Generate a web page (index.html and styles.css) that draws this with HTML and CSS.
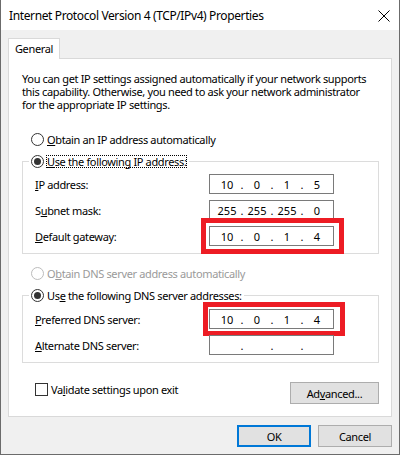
FILE: index.html
```html
<!DOCTYPE html>
<html>
<head>
<meta charset="utf-8">
<link rel="stylesheet" href="styles.css">
</head>
<body>
<div class="window">
  <div class="titlebar">
    <span class="title">Internet Protocol Version 4 (TCP/IPv4) Properties</span>
    <svg class="close" width="12" height="12" viewBox="0 0 12 12"><path d="M0.5 0.5L11.5 11.5M11.5 0.5L0.5 11.5" stroke="#000" stroke-width="1" fill="none"/></svg>
  </div>
  <div class="client">
    <div class="tabs"><div class="tab">General</div></div>
    <div class="panel">
      <div class="desc">
        <div class="dline">You can get IP settings assigned automatically if your network supports</div>
        <div class="dline">this capability. Otherwise, you need to ask your network administrator</div>
        <div class="dline">for the appropriate IP settings.</div>
      </div>
      <div class="opt"><span class="radio"></span><span class="lbl"><u>O</u>btain an IP address automatically</span></div>
      <div class="group">
        <div class="legend"><span class="radio checked"></span><span class="lbl focus"><u>U</u>se the following IP address:</span></div>
        <div class="field"><span class="flabel"><u>I</u>P address:</span>
          <div class="ip"><span class="seg">10</span><span class="dot">.</span><span class="seg">0</span><span class="dot">.</span><span class="seg">1</span><span class="dot">.</span><span class="seg">5</span></div>
        </div>
        <div class="field"><span class="flabel">S<u>u</u>bnet mask:</span>
          <div class="ip"><span class="seg">255</span><span class="dot">.</span><span class="seg">255</span><span class="dot">.</span><span class="seg">255</span><span class="dot">.</span><span class="seg">0</span></div>
        </div>
        <div class="field"><span class="flabel"><u>D</u>efault gateway:</span>
          <div class="ip"><span class="seg">10</span><span class="dot">.</span><span class="seg">0</span><span class="dot">.</span><span class="seg">1</span><span class="dot">.</span><span class="seg">4</span><span class="mark mark-gw"></span></div>
        </div>
      </div>
      <div class="opt disabled"><span class="radio"></span><span class="lbl">O<u>b</u>tain DNS server address automatically</span></div>
      <div class="group">
        <div class="legend"><span class="radio checked"></span><span class="lbl">Us<u>e</u> the following DNS server addresses:</span></div>
        <div class="field dns-first"><span class="flabel"><u>P</u>referred DNS server:</span>
          <div class="ip"><span class="seg">10</span><span class="dot">.</span><span class="seg">0</span><span class="dot">.</span><span class="seg">1</span><span class="dot">.</span><span class="seg">4</span><span class="mark mark-dns"></span></div>
        </div>
        <div class="field"><span class="flabel"><u>A</u>lternate DNS server:</span>
          <div class="ip"><span class="seg"></span><span class="dot">.</span><span class="seg"></span><span class="dot">.</span><span class="seg"></span><span class="dot">.</span><span class="seg"></span></div>
        </div>
      </div>
      <div class="bottomrow">
        <div class="check"><span class="box"></span><span class="lbl">Va<u>l</u>idate settings upon exit</span></div>
        <div class="btn adv">Ad<u>v</u>anced...</div>
      </div>
    </div>
    <div class="buttons">
      <div class="btn default">OK</div>
      <div class="btn">Cancel</div>
    </div>
  </div>
</div>
</body>
</html>
```
FILE: styles.css
```css
* { box-sizing: border-box; margin: 0; padding: 0; }
body { margin: 0; font-family: "Noto Sans", "Open Sans", sans-serif; font-size: 11px; letter-spacing: -0.35px; color: #000; background: #fff; }
u { text-decoration: underline; text-underline-offset: 1px; }
.window { width: 400px; height: 455px; border: 1px solid #6b6b6b; border-top: none; background: #f0f0f0; display: flex; flex-direction: column; }
.titlebar { height: 30px; background: #fff; display: flex; justify-content: space-between; padding-left: 8px; flex: none; }
.title { font-size: 12px; letter-spacing: -0.38px; line-height: 31px; white-space: nowrap; }
.close { margin: 10px 9px 0 0; }
.client { padding: 8px 7px 0 7px; }
.tabs { display: flex; }
.tab { width: 52px; height: 21px; border: 1px solid #d9d9d9; border-bottom: none; background: #fff; margin-bottom: -1px; position: relative; z-index: 1; text-align: center; line-height: 19px; }
.panel { width: 384px; height: 359px; border: 1px solid #d9d9d9; background: #fff; padding: 0 12px 0 13px; }
.desc { margin-top: 13px; white-space: nowrap; }
.dline { height: 13px; line-height: 13px; }
.opt { display: flex; align-items: center; height: 13px; margin: 22px 0 0 9px; }
.disabled { margin-top: 13px; }
.radio { width: 13px; height: 13px; border-radius: 50%; border: 1px solid #333; background: #fff; flex: none; display: flex; align-items: center; justify-content: center; }
.radio.checked::after { content: ""; width: 7px; height: 7px; border-radius: 50%; background: #333; }
.lbl { margin-left: 3px; line-height: 13px; white-space: nowrap; }
.disabled .radio { border-color: #bcbcbc; }
.disabled .lbl { color: #9a9a9a; }
.group { border: 1px solid #dcdcdc; margin-top: 15px; padding: 0 44px 7px 12px; }
.legend { display: flex; align-items: center; height: 13px; margin: -7px 0 0 -6px; padding: 0 2px; background: #fff; width: fit-content; }
.focus { padding: 0 1px; margin-left: 2px; outline: 1px dotted #000; outline-offset: -1px; }
.field { display: flex; align-items: center; margin-top: 6px; height: 20px; }
.dns-first { margin-top: 7px; }
.flabel { flex: 1; white-space: nowrap; }
.ip { width: 125px; height: 20px; border: 1px solid #7a7a7a; display: flex; align-items: center; padding-left: 4px; position: relative; background: #fff; letter-spacing: 0; }
.seg { width: 26px; text-align: center; }
.dot { width: 4px; text-align: center; }
.mark { position: absolute; border: 5px solid #ed1c24; }
.mark-gw { left: -9px; top: -9px; right: -11px; bottom: -9px; }
.mark-dns { left: -7px; top: -8px; right: -12px; bottom: -8px; }
.bottomrow { display: flex; justify-content: space-between; align-items: flex-start; margin-top: 19px; }
.check { display: flex; align-items: center; height: 13px; margin: 1px 0 0 13px; }
.box { width: 13px; height: 13px; border: 1px solid #333; background: #fff; flex: none; }
.btn { height: 22px; width: 74px; background: #e1e1e1; border: 1px solid #adadad; display: flex; align-items: center; justify-content: center; }
.adv { width: 89px; }
.default { border: 2px solid #0078d7; }
.buttons { display: flex; justify-content: flex-end; gap: 7px; margin-top: 8px; }
```
